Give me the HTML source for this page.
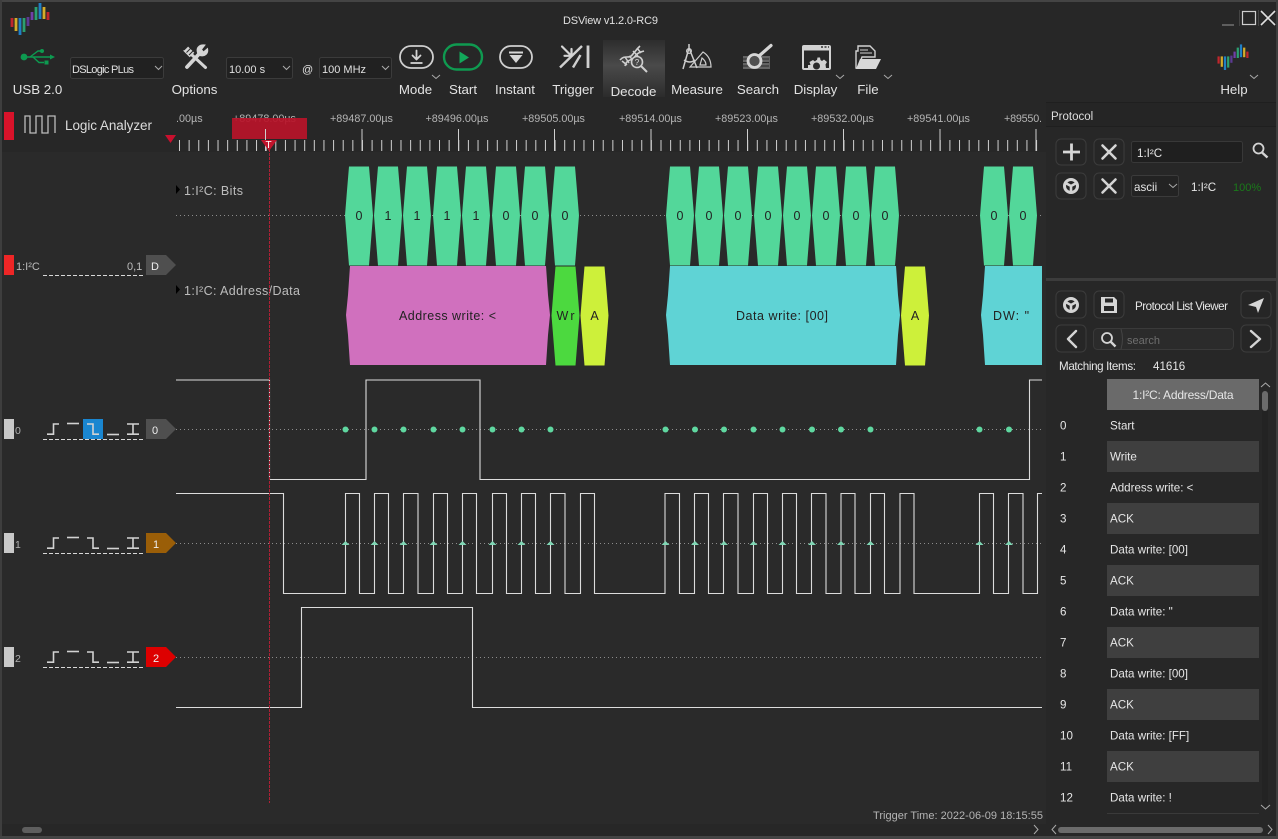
<!DOCTYPE html>
<html><head><meta charset="utf-8"><title>DSView v1.2.0-RC9</title>
<style>
html,body{margin:0;padding:0;background:#272727;width:1278px;height:839px;overflow:hidden}
svg{display:block}
text{font-family:"Liberation Sans",sans-serif;fill:#e4e4e4}
.tb{font-size:13.3px;text-anchor:middle;fill:#e2e2e2}
.ru{font-size:10.8px;fill:#b4b4b4}
.c{font-size:11px;fill:#e0e0e0}
.lb{font-size:12.5px;fill:#bdbdbd}
.d{font-size:12.5px;fill:#222;text-anchor:middle}
.l{font-size:11.6px;fill:#e6e6e6}
.btn{fill:#262626;stroke:#3c3c3c;stroke-width:1}
.ic{fill:none;stroke:#d4d4d4;stroke-linecap:round;stroke-linejoin:round}
.chev{fill:none;stroke:#aaa;stroke-width:1}
.tag{font-size:11px;fill:#eee;text-anchor:middle}
</style></head><body>
<svg width="1278" height="839" viewBox="0 0 1278 839" xmlns="http://www.w3.org/2000/svg">
<defs>
<g id="logo" fill="none" stroke-width="2.8">
<path d="M12 18V27" stroke="#c0262c"/><path d="M16 18V31" stroke="#d4ad2b"/><path d="M20 18V35" stroke="#2080c5"/><path d="M24 18V32" stroke="#2ca070"/><path d="M28 17V26" stroke="#5c3a92"/><path d="M32 12V20" stroke="#7040a8"/><path d="M36 7V20" stroke="#2ca070"/><path d="M40 3V19" stroke="#2080c5"/><path d="M44 7V19" stroke="#d4ad2b"/><path d="M48 12V20" stroke="#c0262c"/>
</g>
<polygon id="bit" points="-10,-49 10,-49 12,-25 14,0 12,25 10,50 -10,50 -12,25 -14,0 -12,-25"/>
<g id="trig" fill="none" stroke="#d2d2d2" stroke-width="1.6">
<path d="M47 15.2H53.5V5H59"/><path d="M67 4.5H79"/><path d="M87 5H93V15.2H99"/><path d="M107 15.5H119"/><path d="M127 5H139M127 15.2H139M133 5V15.2"/>
</g>
<g id="dash"><path d="M43 .5H143" stroke="#d8d8d8" stroke-dasharray="4 2" fill="none"/></g>
<polygon id="tri" points="0,-4 4,0 -4,0" fill="#7fd6b4"/>
<g id="wheel" class="ic"><circle cx="0" cy="0" r="6.5" stroke-width="3"/><path d="M0 0V6M0 0L-5.5 -3M0 0L5.5 -3" stroke-width="2.6"/></g>
<path id="x" class="ic" stroke-width="2.6" d="M-6.5 -6.5L6.5 6.5M6.5 -6.5L-6.5 6.5"/>
<linearGradient id="act" x1="0" y1="0" x2="0" y2="1"><stop offset="0" stop-color="#2d2d2d"/><stop offset=".45" stop-color="#4a4a4a"/><stop offset="1" stop-color="#2c2c2c"/></linearGradient>
<clipPath id="view"><rect x="176" y="150" width="866" height="660"/></clipPath>
</defs>

<rect width="1278" height="839" fill="#272727"/>
<!-- viewport -->
<rect x="0" y="152" width="1046" height="672" fill="#2a2a2a"/>

<!-- frame -->
<rect x="0" y="0" width="1278" height="2" fill="#444"/>
<rect x="0" y="0" width="2" height="839" fill="#3e3e3e"/>
<rect x="1276" y="0" width="2" height="839" fill="#3e3e3e"/>
<rect x="0" y="836" width="1278" height="3" fill="#444"/>

<!-- title -->
<use href="#logo"/>
<text x="563" y="24" style="font-size:11px;fill:#e0e0e0" textLength="95">DSView v1.2.0-RC9</text>
<path d="M1222 25H1234" stroke="#777" stroke-width="1.4"/>
<rect x="1242.5" y="11.5" width="13" height="13" fill="none" stroke="#cfcfcf" stroke-width="1.2"/>
<path d="M1261 11L1275 25M1275 11L1261 25" stroke="#e0e0e0" stroke-width="1.6"/>
<path d="M1239.5 10V26M1258.5 10V26" stroke="#444"/>

<!-- USB -->
<g fill="none" stroke="#0d9a50" stroke-width="1.4">
<path d="M24 57H50"/><path d="M30 57L38 51H41"/><path d="M33 57L39 62.5H44"/>
</g>
<circle cx="24" cy="57" r="3.4" fill="#0d9a50"/><circle cx="42" cy="51" r="2" fill="#0d9a50"/><rect x="44.5" y="60.5" width="4" height="4" fill="#0d9a50"/><path d="M50 54.5L55 57L50 59.5Z" fill="#0d9a50"/>
<text class="tb" x="37.5" y="94">USB 2.0</text>

<!-- combos -->
<g fill="#212121" stroke="#3b3b3b">
<rect x="70.5" y="57.5" width="93" height="21" rx="2"/><rect x="226.5" y="57.5" width="66" height="21" rx="2"/><rect x="319.5" y="57.5" width="72" height="21" rx="2"/>
</g>
<text class="c" x="72" y="73" textLength="62">DSLogic PLus</text>
<text class="c" x="229" y="73">10.00 s</text>
<text class="c" x="302" y="73">@</text>
<text class="c" x="322" y="73">100 MHz</text>
<path class="chev" d="M155 66l3.5 3.5 3.5-3.5M283 66l3.5 3.5 3.5-3.5M382 66l3.5 3.5 3.5-3.5"/>

<!-- Options -->
<g stroke="#d4d4d4" fill="none">
<path d="M185.500 48.500L192 55" stroke-width="6.500"/>
<path d="M192 55L205.500 67.500" stroke-width="3" stroke-linecap="round"/>
<path d="M187 67L200 53" stroke-width="3.800" stroke-linecap="round"/>
<path d="M198 54Q195.500 48 200 45.500Q202.500 44.500 205 45L201.500 49.500L203.500 52L207.500 48.500Q208.500 52 206 54.500Q203 57 199 55Z" fill="#d4d4d4" stroke-width="1"/>
</g>
<path d="M184 50L188 46M186.500 52.500L190.500 48.500M189 55L193 51" stroke="#2a2a2a"/>
<text class="tb" x="194.5" y="94">Options</text>

<!-- Mode -->
<rect x="400" y="46" width="33" height="22" rx="11" fill="none" stroke="#cfcfcf" stroke-width="1.8"/>
<path d="M416.500 50.500V59M412.500 55.500L416.500 59.500L420.500 55.500" class="ic" stroke-width="1.8"/><path d="M410.500 63H422.500" stroke="#d4d4d4" stroke-width="1.8"/>
<text class="tb" x="415.5" y="94">Mode</text>
<path class="chev" d="M432 75l4 3.500 4-3.500"/>
<!-- Start -->
<rect x="444" y="44.500" width="38" height="25" rx="12.500" fill="none" stroke="#0f9a50" stroke-width="2.400"/>
<path d="M459.500 51.500L469 57.500L459.500 63.500Z" fill="#12a85a"/>
<text class="tb" x="463" y="94">Start</text>
<!-- Instant -->
<rect x="500" y="46" width="32" height="22" rx="11" fill="none" stroke="#cfcfcf" stroke-width="1.800"/>
<path d="M509 51.500H523V53.500H509Z M509.500 55H522.500L516 63Z" fill="#d6d6d6"/>
<text class="tb" x="515" y="94">Instant</text>
<!-- Trigger -->
<path d="M560 67.500L582 46M573 67.500L580.500 55" stroke="#cfcfcf" stroke-width="2.400" fill="none"/>
<path d="M588 45.500V68" stroke="#cfcfcf" stroke-width="2.800"/>
<path d="M562 46.500L570.500 55M571.500 49V55.800H564.500" class="ic" stroke-width="2.200"/>
<text class="tb" x="573" y="94">Trigger</text>
<!-- Decode -->
<rect x="603" y="40" width="62" height="57" fill="url(#act)"/>
<g fill="none" stroke="#cfcfcf">
<path d="M620 60C625 54 629 60 633 54C636 50 637 49 640 46" stroke-width="1.600"/>
<path d="M625 66C627 58 632 62 636 55C639 52 641 52 644 51" stroke-width="1.600"/>
<path d="M622 61L627 65M625 57L629 63M629 56L633 60M633 51L638 56M637 48L641 53" stroke-width="1.500"/>
<circle cx="637" cy="62" r="5.500" stroke-width="1.600" fill="#474747"/><path d="M641 66L647 72" stroke-width="2"/>
</g>
<text x="637" y="65" style="font-size:8px;fill:#ddd" text-anchor="middle">?</text>
<text class="tb" x="633.5" y="96">Decode</text>
<!-- Measure -->
<g fill="none" stroke="#cdcdcd" stroke-width="1.200">
<path d="M689 44V50M689 48L683 69M689 48L697 68M684 60Q690 64 695 60" stroke-width="1.500"/><circle cx="689" cy="51" r="2.400"/>
<path d="M690 67L711 67Q711 57 703 52Z"/><path d="M700 65H706Q706 61 702 58Z"/>
</g>
<text class="tb" x="697" y="94">Measure</text>
<!-- Search -->
<g fill="#7f7f7f" opacity=".7"><rect x="743" y="56" width="27" height="13"/></g>
<path d="M743 59H769M743 62.500H769M743 66H769" stroke="#2a2a2a"/>
<circle cx="754.500" cy="61" r="6.500" fill="#505050" stroke="#d6d6d6" stroke-width="2.800"/>
<path d="M759 56L771 45.500" stroke="#d6d6d6" stroke-width="3.200" stroke-linecap="round"/>
<text class="tb" x="758" y="94">Search</text>
<!-- Display -->
<rect x="803" y="46" width="27" height="23" rx="1" fill="none" stroke="#d2d2d2" stroke-width="2"/>
<rect x="803" y="45.500" width="27" height="5" fill="#d2d2d2"/>
<path d="M821 47H823M824.500 47H826.500M828 47H829" stroke="#333" stroke-width="1.500"/>
<path d="M808 68V65H810.500L809.500 62L813 60L815 61.500Q816 60 817 60L817.500 57.500H820L820.500 60L822 61L824 59.500L827 62L825.500 64.500L826 68Z" fill="#d2d2d2"/>
<circle cx="816.500" cy="66" r="3.500" fill="#2a2a2a"/>
<text class="tb" x="815.500" y="94">Display</text>
<path class="chev" d="M836 75l4 3.500 4-3.500"/>
<!-- File -->
<path d="M856 68V51H858V46H870L875 51V57H862L858 68Z" fill="none" stroke="#d2d2d2" stroke-width="1.400"/>
<path d="M860 50H868M860 53H872" stroke="#d2d2d2"/>
<path d="M860 59H881L876 69H856Z" fill="#d8d8d8"/>
<text class="tb" x="868" y="94">File</text>
<path class="chev" d="M884 75l4 3.500 4-3.500"/>
<!-- Help -->
<use href="#logo" transform="translate(1209 42) scale(.8)"/>
<path class="chev" d="M1250 75l4 3.500 4-3.500"/>
<text class="tb" x="1234" y="94">Help</text>

<!-- Logic Analyzer header -->
<rect x="4" y="112" width="10" height="28" fill="#d8132a"/>
<path d="M25 133V116H30V133H36V116H42V133H48V116H55V133" fill="none" stroke="#bdbdbd" stroke-width="1.300"/>
<text x="65" y="130" style="font-size:13.5px;fill:#dcdcdc" textLength="87">Logic Analyzer</text>
<path d="M165 135H176L170.500 143Z" fill="#c8102e"/>

<!-- ruler -->
<text class="ru" x="176" y="122">.00µs</text>
<text class="ru" x="233" y="122">+89478.00µs</text>
<rect x="232" y="118" width="75" height="21" fill="#b8142a" opacity=".93"/>
<text class="ru" x="330" y="122">+89487.00µs</text>
<text class="ru" x="425.500" y="122">+89496.00µs</text>
<text class="ru" x="522" y="122">+89505.00µs</text>
<text class="ru" x="619" y="122">+89514.00µs</text>
<text class="ru" x="715" y="122">+89523.00µs</text>
<text class="ru" x="811" y="122">+89532.00µs</text>
<text class="ru" x="907" y="122">+89541.00µs</text>
<text class="ru" x="1004" y="122" textLength="38">+89550.</text>
<path d="M179 145.500H1042" stroke="#cfcfcf" stroke-width="11" stroke-dasharray="1 8.630" fill="none"/>
<path d="M265.500 129V151M362 129V151M458.500 129V151M554.500 129V151M651 129V151M747.500 129V151M843.500 129V151M940 129V151M1036 129V151" stroke="#cfcfcf"/>
<path d="M261 140H277L269 151Z" fill="#c0142c"/>
<text x="268.500" y="148" style="font-size:10px;fill:#fff" text-anchor="middle">T</text>

<!-- left rows -->
<rect x="4" y="255" width="10" height="20" fill="#ee2626"/>
<text x="16" y="270" style="font-size:11px;fill:#bcbcbc">1:I²C</text>
<text x="127" y="270" style="font-size:11px;fill:#bcbcbc">0,1</text>
<use href="#dash" y="275"/>
<polygon points="146,255 166,255 176,265 166,275 146,275" fill="#4f4f4f"/>
<text class="tag" x="155" y="270">D</text>

<rect x="4" y="419" width="10" height="20" fill="#c8c8c8"/>
<text x="15" y="434" style="font-size:10.5px;fill:#b0b0b0">0</text>
<rect x="83" y="419" width="20" height="20" fill="#1a86d0"/>
<use href="#trig" y="419"/>
<use href="#dash" y="439"/>
<polygon points="146,419 166,419 176,429 166,439 146,439" fill="#4f4f4f"/>
<text class="tag" x="155" y="434">0</text>
<rect x="4" y="533" width="10" height="20" fill="#c8c8c8"/>
<text x="15" y="548" style="font-size:10.5px;fill:#b0b0b0">1</text>
<use href="#trig" y="533"/>
<use href="#dash" y="553"/>
<polygon points="146,533 166,533 176,543 166,553 146,553" fill="#9a5e08"/>
<text class="tag" x="156" y="548">1</text>
<rect x="4" y="647" width="10" height="20" fill="#c8c8c8"/>
<text x="15" y="662" style="font-size:10.5px;fill:#b0b0b0">2</text>
<use href="#trig" y="647"/>
<use href="#dash" y="667"/>
<polygon points="146,647 166,647 176,657 166,667 146,667" fill="#dd0000"/>
<text class="tag" x="156" y="662">2</text>

<!-- dotted -->
<path d="M176 429.500H1042M176 543.500H1042M176 657.500H1042M176 215.500H1042" stroke="#8c8c8c" stroke-dasharray="1 3" fill="none"/>

<!-- decode labels -->
<path d="M176 185L180 189.500L176 194Z M176 285L180 289.500L176 294Z" fill="#000"/>
<text class="lb" x="184" y="195" textLength="59">1:I²C: Bits</text>
<text class="lb" x="184" y="295" textLength="116">1:I²C: Address/Data</text>

<g clip-path="url(#view)">
<g fill="#53d79a">
<use href="#bit" x="359" y="215.500"/><use href="#bit" x="388" y="215.500"/><use href="#bit" x="417" y="215.500"/><use href="#bit" x="447" y="215.500"/><use href="#bit" x="476" y="215.500"/><use href="#bit" x="506" y="215.500"/><use href="#bit" x="535" y="215.500"/><use href="#bit" x="565" y="215.500"/>
<use href="#bit" x="680" y="215.500"/><use href="#bit" x="709" y="215.500"/><use href="#bit" x="738" y="215.500"/><use href="#bit" x="768" y="215.500"/><use href="#bit" x="797" y="215.500"/><use href="#bit" x="826" y="215.500"/><use href="#bit" x="856" y="215.500"/><use href="#bit" x="885" y="215.500"/>
<use href="#bit" x="994" y="215.500"/><use href="#bit" x="1023" y="215.500"/>
</g>
<polygon points="350,266 546,266 548,295 550,315 548,335 546,365 350,365 348,335 346,315 348,295" fill="#d070be"/>
<use href="#bit" x="565.500" y="315.500" fill="#4cd93f"/>
<use href="#bit" x="594.500" y="315.500" fill="#cdf03a"/>
<polygon points="670,266 896,266 898,295 900,315 898,335 896,365 670,365 668,335 666,315 668,295" fill="#5fd3d5"/>
<use href="#bit" x="915" y="315.500" fill="#cdf03a"/>
<polygon points="985,266 1100,266 1100,365 985,365 983,335 981,315 983,295" fill="#5fd3d5"/>
</g>
<g>
<text class="d" x="359" y="220">0</text><text class="d" x="388" y="220">1</text><text class="d" x="417" y="220">1</text><text class="d" x="447" y="220">1</text><text class="d" x="476" y="220">1</text><text class="d" x="506" y="220">0</text><text class="d" x="535" y="220">0</text><text class="d" x="565" y="220">0</text>
<text class="d" x="680" y="220">0</text><text class="d" x="709" y="220">0</text><text class="d" x="738" y="220">0</text><text class="d" x="768" y="220">0</text><text class="d" x="797" y="220">0</text><text class="d" x="826" y="220">0</text><text class="d" x="856" y="220">0</text><text class="d" x="885" y="220">0</text>
<text class="d" x="994" y="220">0</text><text class="d" x="1023" y="220">0</text>
<text class="d" x="447.500" y="320" textLength="97">Address write: &lt;</text>
<text class="d" x="565.500" y="320" textLength="18">Wr</text>
<text class="d" x="594.500" y="320">A</text>
<text class="d" x="782" y="320" textLength="92">Data write: [00]</text>
<text class="d" x="915" y="320">A</text>
<text class="d" x="1011" y="320" textLength="36">DW: "</text>
</g>

<!-- waveforms -->
<g fill="none" stroke="#dcdcdc" stroke-width="1.100">
<path d="M176 380H269.500V479.500H366V380H480V479.500H1029.500V380H1042"/>
<path d="M176 493.500H283.500V593.500H345.500V493.500H359.500V593.500H374.500V493.500H388.500V593.500H403.500V493.500H418V593.500H433.500V493.500H447.500V593.500H462.500V493.500H476.500V593.500H492.500V493.500H506.500V593.500H521.500V493.500H535.500V593.500H550.500V493.500H565V593.500H580.500V493.500H594.500V593.500H665V493.500H679.500V593.500H694.500V493.500H708.500V593.500H723.500V493.500H738V593.500H753.500V493.500H767.500V593.500H782.500V493.500H796.500V593.500H811.500V493.500H826V593.500H841V493.500H855V593.500H870.500V493.500H884.500V593.500H900V493.500H914V593.500H979.500V493.500H993.500V593.500H1008.500V493.500H1023V593.500H1037.500V493.500H1042"/>
<path d="M176 707.500H301.500V607.500H472.500V707.500H1042"/>
</g>
<g fill="#5fd7a0">
<circle cx="345.500" cy="429.500" r="3"/><circle cx="374.500" cy="429.500" r="3"/><circle cx="403.500" cy="429.500" r="3"/><circle cx="433.500" cy="429.500" r="3"/><circle cx="462.500" cy="429.500" r="3"/><circle cx="492.500" cy="429.500" r="3"/><circle cx="521.500" cy="429.500" r="3"/><circle cx="550.500" cy="429.500" r="3"/>
<circle cx="665.500" cy="429.500" r="3"/><circle cx="695" cy="429.500" r="3"/><circle cx="724" cy="429.500" r="3"/><circle cx="753.500" cy="429.500" r="3"/><circle cx="782.500" cy="429.500" r="3"/><circle cx="812" cy="429.500" r="3"/><circle cx="841" cy="429.500" r="3"/><circle cx="870.500" cy="429.500" r="3"/>
<circle cx="979.500" cy="429.500" r="3"/><circle cx="1009" cy="429.500" r="3"/>
</g>
<g>
<use href="#tri" x="345.500" y="545"/><use href="#tri" x="374.500" y="545"/><use href="#tri" x="403.500" y="545"/><use href="#tri" x="433.500" y="545"/><use href="#tri" x="462.500" y="545"/><use href="#tri" x="492.500" y="545"/><use href="#tri" x="521.500" y="545"/><use href="#tri" x="550.500" y="545"/>
<use href="#tri" x="665.500" y="545"/><use href="#tri" x="695" y="545"/><use href="#tri" x="724" y="545"/><use href="#tri" x="753.500" y="545"/><use href="#tri" x="782.500" y="545"/><use href="#tri" x="812" y="545"/><use href="#tri" x="841" y="545"/><use href="#tri" x="870.500" y="545"/>
<use href="#tri" x="979.500" y="545"/><use href="#tri" x="1009" y="545"/>
</g>
<path d="M269.500 149V803" stroke="#b02035" stroke-dasharray="3 1" fill="none"/>

<text x="873" y="819" style="font-size:11px;fill:#b4b4b4" textLength="170">Trigger Time: 2022-06-09 18:15:55</text>

<!-- right panel -->
<rect x="1046" y="100" width="230" height="736" fill="#272727"/>
<rect x="1046" y="102" width="230" height="25" fill="#252525"/>
<path d="M1046 102.500H1276M1046 126.500H1276" stroke="#1f1f1f"/>
<text x="1051" y="120" style="font-size:11.5px;fill:#dedede">Protocol</text>
<rect x="1056" y="139" width="30" height="26" rx="5" class="btn"/>
<rect x="1094" y="139" width="30" height="26" rx="5" class="btn"/>
<rect x="1056" y="173" width="30" height="26" rx="5" class="btn"/>
<rect x="1094" y="173" width="30" height="26" rx="5" class="btn"/>
<path d="M1063 152H1080M1071.500 143.500V160.500" stroke="#d6d6d6" stroke-width="2.800"/>
<use href="#x" x="1109" y="152"/>
<use href="#wheel" x="1071" y="186"/>
<use href="#x" x="1109" y="186"/>
<rect x="1131.500" y="141.500" width="111" height="21" rx="2" fill="#1f1f1f" stroke="#383838"/>
<text class="l" x="1137" y="157">1:I²C</text>
<circle cx="1258.500" cy="148.500" r="5" fill="none" stroke="#d4d4d4" stroke-width="1.800"/><path d="M1262 152.500L1267.500 157.500" stroke="#d4d4d4" stroke-width="2.400"/>
<rect x="1131.500" y="175.500" width="47" height="21" rx="2" fill="#232323" stroke="#3b3b3b"/>
<text class="l" x="1134" y="191">ascii</text>
<path class="chev" d="M1169 184l4 3.500 4-3.500"/>
<text class="l" x="1191" y="191">1:I²C</text>
<text x="1233" y="191" style="font-size:11px;fill:#1a7a1a">100%</text>

<rect x="1046" y="278" width="230" height="3" fill="#3c3c3c"/>
<rect x="1056" y="291" width="30" height="27" rx="5" class="btn"/>
<rect x="1094" y="291" width="30" height="27" rx="5" class="btn"/>
<rect x="1241" y="291" width="30" height="27" rx="5" class="btn"/>
<use href="#wheel" x="1071" y="305"/>
<path d="M1101 297H1114L1117 300V313H1101Z" fill="#d6d6d6"/>
<rect x="1105" y="298.500" width="8" height="4" fill="#272727"/><rect x="1104" y="306" width="10" height="5" fill="#272727"/>
<text class="l" x="1135" y="310" textLength="93">Protocol List Viewer</text>
<path d="M1248 305L1264 298L1258 313L1256 307Z" fill="#d6d6d6"/>
<rect x="1056" y="325" width="30" height="27" rx="5" class="btn"/>
<rect x="1241" y="325" width="30" height="27" rx="5" class="btn"/>
<path d="M1076 331L1068 339L1076 347M1251 331L1260 339L1251 347" class="ic" stroke-width="2.400"/>
<rect x="1093.500" y="328.500" width="140" height="21" rx="4" fill="#2b2b2b" stroke="#3a3a3a"/>
<path d="M1121 329Q1124 339 1121 349" fill="none" stroke="#444"/>
<circle cx="1107" cy="338" r="5" fill="none" stroke="#d4d4d4" stroke-width="1.800"/><path d="M1110.500 341.500L1115.500 346.500" stroke="#d4d4d4" stroke-width="2.400"/>
<text x="1127" y="344" style="font-size:11px;fill:#6e6e6e">search</text>
<text class="l" x="1059" y="370" textLength="77">Matching Items:</text>
<text class="l" x="1153" y="370">41616</text>

<!-- table -->
<rect x="1107" y="379" width="152" height="31" fill="#6a6a6a"/>
<text x="1183" y="399" style="font-size:12px;fill:#e6e6e6" text-anchor="middle" textLength="101">1:I²C: Address/Data</text>
<g fill="#3f3f3f">
<rect x="1107" y="441" width="152" height="31"/><rect x="1107" y="503" width="152" height="31"/><rect x="1107" y="565" width="152" height="31"/><rect x="1107" y="627" width="152" height="31"/><rect x="1107" y="689" width="152" height="31"/><rect x="1107" y="751" width="152" height="31"/>
</g>
<path d="M1107 813.500H1259" stroke="#3a3a3a"/>
<g>
<text class="l" x="1060" y="429.500">0</text><text class="l" x="1110" y="429.500">Start</text>
<text class="l" x="1060" y="460.500">1</text><text class="l" x="1110" y="460.500">Write</text>
<text class="l" x="1060" y="491.500">2</text><text class="l" x="1110" y="491.500">Address write: &lt;</text>
<text class="l" x="1060" y="522.500">3</text><text class="l" x="1110" y="522.500">ACK</text>
<text class="l" x="1060" y="553.500">4</text><text class="l" x="1110" y="553.500">Data write: [00]</text>
<text class="l" x="1060" y="584.500">5</text><text class="l" x="1110" y="584.500">ACK</text>
<text class="l" x="1060" y="615.500">6</text><text class="l" x="1110" y="615.500">Data write: "</text>
<text class="l" x="1060" y="646.500">7</text><text class="l" x="1110" y="646.500">ACK</text>
<text class="l" x="1060" y="677.500">8</text><text class="l" x="1110" y="677.500">Data write: [00]</text>
<text class="l" x="1060" y="708.500">9</text><text class="l" x="1110" y="708.500">ACK</text>
<text class="l" x="1060" y="739.500">10</text><text class="l" x="1110" y="739.500">Data write: [FF]</text>
<text class="l" x="1060" y="770.500">11</text><text class="l" x="1110" y="770.500">ACK</text>
<text class="l" x="1060" y="801.500">12</text><text class="l" x="1110" y="801.500">Data write: !</text>
</g>
<!-- scrollbars -->
<rect x="1262" y="392" width="6" height="416" fill="#232323"/>
<rect x="1262" y="391" width="6" height="20" rx="3" fill="#6b6b6b"/>
<path class="chev" d="M1261 387l4.500-4 4.500 4M1261 805l4.500 4 4.500-4"/>
<rect x="22" y="827" width="20" height="6" rx="3" fill="#5e5e5e"/>
<path class="chev" d="M1034 825l4 4.500-4 4.500M1056 825l-4 4.500 4 4.500M1268 825l4 4.500-4 4.500"/>
<rect x="1058" y="827" width="205" height="6" rx="3" fill="#6b6b6b"/>
</svg>
</body></html>
